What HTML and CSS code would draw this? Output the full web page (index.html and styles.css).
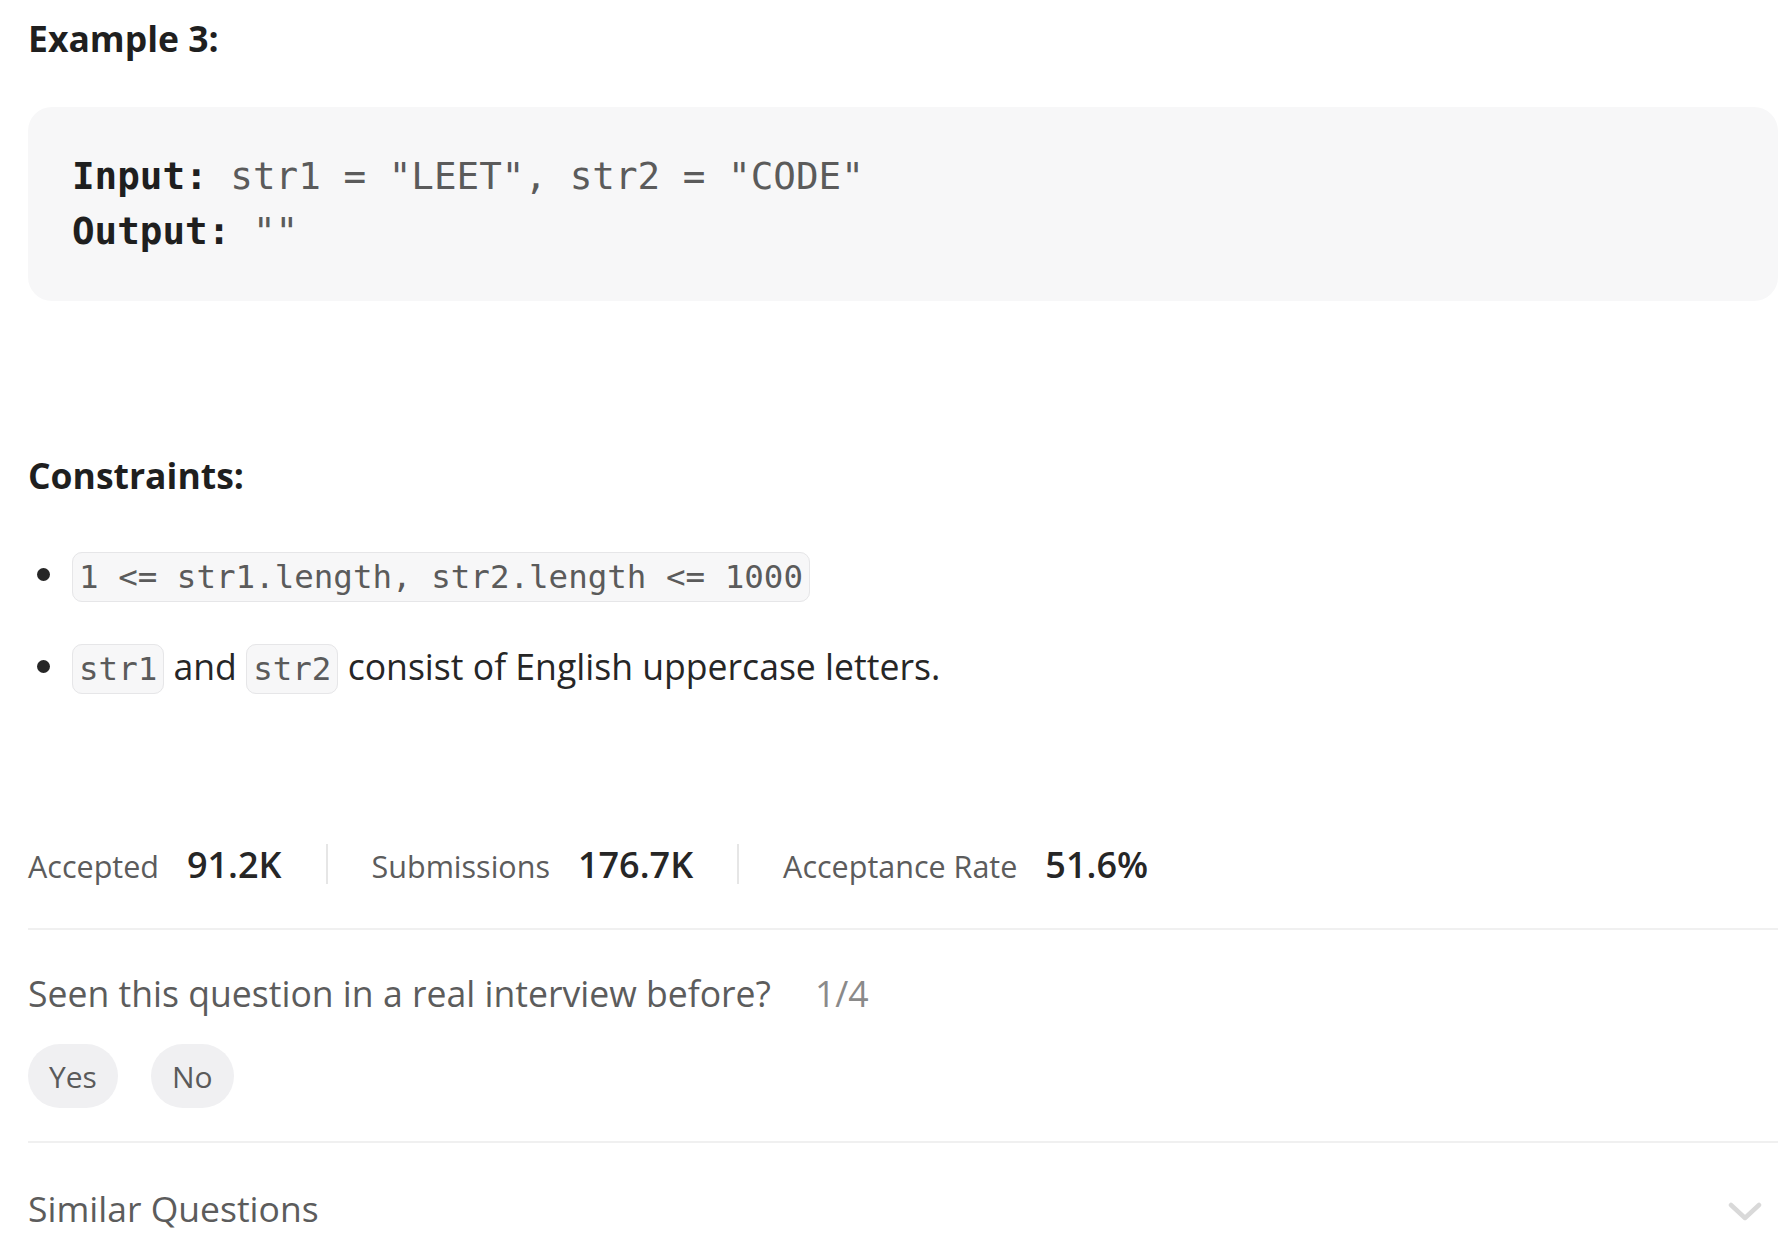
FILE: index.html
```html
<!DOCTYPE html>
<html lang="en">
<head>
<meta charset="utf-8">
<title>Example 3</title>
<link rel="stylesheet" href="styles.css">
</head>
<body>
<div class="page">
  <p class="heading heading-example">Example 3:</p>
  <pre class="example"><strong>Input:</strong> str1 = "LEET", str2 = "CODE"
<strong>Output:</strong> ""</pre>

  <p class="heading heading-constraints">Constraints:</p>
  <ul class="constraints">
    <li><code>1 &lt;= str1.length, str2.length &lt;= 1000</code></li>
    <li><code>str1</code> and <code>str2</code> consist of English uppercase letters.</li>
  </ul>

  <div class="stats">
    <div class="stat"><span class="stat-label">Accepted</span><span class="stat-value">91.2K</span></div>
    <div class="stat-sep"></div>
    <div class="stat"><span class="stat-label">Submissions</span><span class="stat-value">176.7K</span></div>
    <div class="stat-sep"></div>
    <div class="stat"><span class="stat-label">Acceptance Rate</span><span class="stat-value">51.6%</span></div>
  </div>

  <div class="divider"></div>

  <div class="seen">
    <span>Seen this question in a real interview before?</span>
    <span class="seen-count">1/4</span>
  </div>
  <div class="pills">
    <button class="pill">Yes</button>
    <button class="pill">No</button>
  </div>

  <div class="divider divider-second"></div>

  <div class="similar">
    <span>Similar Questions</span>
    <svg class="chevron" width="34" height="20" viewBox="0 0 34 20" aria-hidden="true">
      <path d="M3 3 L17 16 L31 3" fill="none" stroke="#d9d9d9" stroke-width="4.5" stroke-linecap="round" stroke-linejoin="round"/>
    </svg>
  </div>
</div>
</body>
</html>
```

FILE: styles.css
```css
html, body {
  margin: 0;
  padding: 0;
  background: #ffffff;
}

body {
  font-family: "Open Sans", "Noto Sans", Arial, sans-serif;
  color: #262626;
}

.page {
  width: 1750px;
  padding-left: 28px;
}

.heading {
  margin: 0;
  font-size: 35.5px;
  font-weight: 700;
  line-height: 60px;
  color: #1f1f1f;
}

.heading-example {
  margin-top: 8px;
}

.example {
  margin: 39px 0 0 0;
  background: #f7f7f8;
  border-radius: 24px;
  padding: 42px 44px;
  font-family: "DejaVu Sans Mono", "Liberation Mono", monospace;
  font-size: 37.6px;
  line-height: 55px;
  color: #5b5b5b;
  white-space: pre;
}

.example strong {
  color: #1f1f1f;
  font-weight: 700;
}

.heading-constraints {
  margin-top: 144px;
}

.constraints {
  margin: 37px 0 0 0;
  padding: 0 0 0 44px;
  list-style: none;
}

.constraints li {
  position: relative;
  font-size: 35.6px;
  line-height: 64px;
  margin-bottom: 25px;
  color: #262626;
}

.constraints li::before {
  content: "";
  position: absolute;
  left: -35px;
  top: 26px;
  width: 13px;
  height: 13px;
  border-radius: 50%;
  background: #262626;
}

.constraints code {
  font-family: "DejaVu Sans Mono", "Liberation Mono", monospace;
  font-size: 32.5px;
  color: #5b5b5b;
  background: #f7f7f8;
  border: 1px solid #e6e6e8;
  border-radius: 10px;
  padding: 5px 6px;
}

.stats {
  display: flex;
  align-items: center;
  height: 60px;
  margin-top: 133px;
}

.stat {
  display: flex;
  align-items: baseline;
  gap: 28px;
}

.stat-label {
  font-size: 30.5px;
  color: #5c5c5c;
}

.stat-value {
  font-size: 36px;
  font-weight: 600;
  color: #262626;
}

.stat-sep {
  width: 2px;
  height: 40px;
  background: #e6e6e6;
  margin: 0 44px;
}

.divider {
  height: 2px;
  background: #f0f0f0;
  margin-top: 34px;
}

.seen {
  display: flex;
  align-items: baseline;
  gap: 44px;
  margin-top: 33px;
  font-size: 35.6px;
  line-height: 60px;
  color: #5c5c5c;
}

.seen-count {
  color: #8a8a8a;
}

.pills {
  display: flex;
  gap: 33px;
  margin-top: 21px;
}

.pill {
  height: 64px;
  padding: 0 21px;
  border: none;
  border-radius: 32px;
  background: #f0f0f2;
  font-family: "Open Sans", "Noto Sans", Arial, sans-serif;
  font-size: 30px;
  color: #5a5a5a;
}

.divider-second {
  margin-top: 33px;
}

.similar {
  display: flex;
  justify-content: space-between;
  align-items: center;
  margin-top: 35px;
  font-size: 35.5px;
  line-height: 60px;
  color: #5c5c5c;
}

.chevron {
  margin-right: 16px;
  margin-top: 8px;
}
```
